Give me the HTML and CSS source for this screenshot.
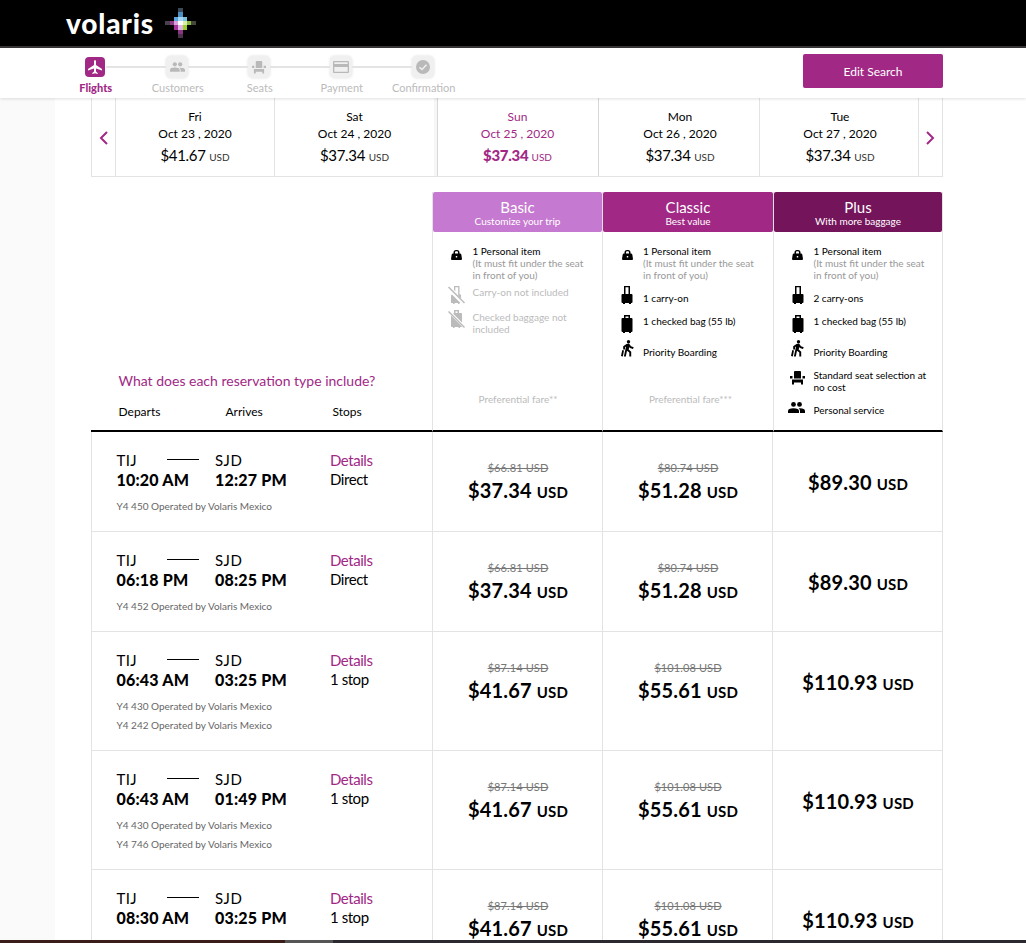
FILE: index.html
```html
<!DOCTYPE html>
<html lang="en">
<head>
<meta charset="utf-8">
<title>Volaris - Flights</title>
<link rel="stylesheet" href="styles.css">
</head>
<body>
<svg class="defs" width="0" height="0">
  <symbol id="bag" viewBox="0 0 11 10"><path fill-rule="evenodd" d="M2.500 3.500V2.500Q2.500 0 5 0H6Q8.500 0 8.500 2.500V3.500H9Q10 3.500 10.300 4.500L11 9Q11 10 10 10H1Q0 10 0 9L.7 4.500Q1 3.500 2 3.500ZM4 3.500H7V2.500Q7 1.300 6 1.300H5Q4 1.300 4 2.500ZM4.800 6V7.400H6.200V6Z"/></symbol>
  <symbol id="carry" viewBox="0 0 12 18"><path fill-rule="evenodd" d="M3 0H9V8H10.500Q11.500 8 11.500 9V16Q11.500 17 10.500 17H10V18H8V17H4V18H2V17H1.500Q.5 17 .5 16V9Q.5 8 1.500 8H3ZM4.500 1.200V8H7.500V1.200Z"/></symbol>
  <symbol id="case" viewBox="0 0 12 18"><path fill-rule="evenodd" d="M3 3V0H9V3H10.500Q11.500 3 11.500 4V16Q11.500 17 10.500 17H10V18H8V17H4V18H2V17H1.500Q.5 17 .5 16V4Q.5 3 1.500 3ZM4.500 1.500V3H7.500V1.500Z"/></symbol>
  <symbol id="walk" viewBox="0 0 13 17"><circle cx="7.500" cy="1.700" r="1.700"/><path d="M5.500 4L8 3.500L10 6.300L12.700 7.300L12 8.900L9 7.900L8.300 7L7.700 9.500L10.200 11.700V16.500H8.300V12.500L6 10.700L4.800 16.500H2.900L5 6.500L4 7.200V9.500H2.200V6.200Z"/><path d="M1.300 10L3 10.500L1.800 16.500L0 16Z"/></symbol>
  <symbol id="seat" viewBox="0 0 15 14"><path d="M4 1Q4 0 5 0H10Q11 0 11 1V7.500H4ZM0 5H2.500V7.500H0ZM12.500 5H15V7.500H12.500ZM2 8.500H13V13.500H11V11.500H4V13.500H2Z"/></symbol>
  <symbol id="people" viewBox="0 0 17 11"><circle cx="5.500" cy="2.400" r="2.400"/><circle cx="11.500" cy="2.400" r="2.400"/><path d="M0 11V9Q0 6.200 5.500 6.200Q11 6.200 11 9V11ZM12 11V9Q12 7.300 10.700 6.300Q17 6 17 9V11Z"/></symbol>
  <symbol id="nocarry" viewBox="0 0 17 18"><path d="M6 4V0H11.500V8.500H13V12.500L10.200 9.700V1.300H7.300V5.300ZM3 9.500L4 8.500L12.500 17H11.500V18H10V17H6.500V18H5V17H3Z"/><path d="M0 1.500L1 .5L17 16.500L16 17.500Z"/></symbol>
  <symbol id="nocase" viewBox="0 0 17 18"><path d="M6 3V0H11V3H13Q14 3 14 4V12.500L5 3.500ZM3 5.500L14 16.500L13 17H12V18H10.500V17H6.500V18H5V17H4Q3 17 3 16Z"/><path d="M0 2L1 1L17 17L16 18Z"/><path d="M7.500 1.300H9.500V3H7.500Z" class="hole"/></symbol>
</svg>
<header class="brand">
  <span class="logo">volaris</span>
  <svg class="star" width="31" height="30" viewBox="0 0 31 30">
    <path fill="#3c4a58" d="M13 0h5v4h-5z"/><path fill="#4d8fc0" d="M13 4h5v5h-5z"/><path fill="#5aa4dc" d="M9 9h4v4H9z"/><path fill="#a4d4f2" d="M13 9h5v4h-5z"/><path fill="#7cc0e0" d="M18 9h4v4h-4z"/>
    <path fill="#4a3f4c" d="M0 13h5v4H0z"/><path fill="#8d3a88" d="M5 13h4v4H5z"/><path fill="#d9a0dc" d="M9 13h4v4H9z"/><path fill="#fff" d="M13 13h5v4h-5z"/><path fill="#d7efa8" d="M18 13h4v4h-4z"/><path fill="#8cb848" d="M22 13h4v4h-4z"/><path fill="#44483a" d="M26 13h5v4h-5z"/>
    <path fill="#a8329c" d="M9 17h4v5H9z"/><path fill="#e0b4e4" d="M13 17h5v5h-5z"/><path fill="#9ad028" d="M18 17h4v5h-4z"/><path fill="#8a3484" d="M13 22h5v4h-5z"/><path fill="#4a3248" d="M13 26h5v4h-5z"/>
  </svg>
</header>
<nav class="steps">
  <ol class="track">
    <li class="step on"><span class="ico"><svg width="14" height="14" viewBox="0 0 14 14"><path d="M7 0Q8 0 8 1.500V5L14 9V10.500L8 8.500V11.500L9.700 13V14L7 13.200L4.300 14V13L6 11.500V8.500L0 10.500V9L6 5V1.500Q6 0 7 0Z"/></svg></span><span class="name">Flights</span></li>
    <li class="step"><span class="ico"><svg width="15" height="10"><use href="#people"/></svg></span><span class="name">Customers</span></li>
    <li class="step"><span class="ico"><svg width="14" height="13"><use href="#seat"/></svg></span><span class="name">Seats</span></li>
    <li class="step"><span class="ico"><svg width="16" height="12" viewBox="0 0 16 12"><path fill-rule="evenodd" d="M1 0H15Q16 0 16 1V11Q16 12 15 12H1Q0 12 0 11V1Q0 0 1 0ZM1.300 1.300V3H14.700V1.300ZM1.300 6V10.700H14.700V6Z"/></svg></span><span class="name">Payment</span></li>
    <li class="step"><span class="ico"><svg width="14" height="14" viewBox="0 0 14 14"><circle cx="7" cy="7" r="7"/><path d="M3.500 7.200L6 9.500L10.500 4.800" class="tick"/></svg></span><span class="name">Confirmation</span></li>
  </ol>
  <button class="edit">Edit Search</button>
</nav>
<main class="page">
  <div class="gutter"></div>
  <div class="content">
    <section class="dates">
      <div class="arrow"><svg width="9" height="14" viewBox="0 0 9 14"><path d="M8 1L2 7L8 13"/></svg></div>
      <div class="day"><span>Fri</span><span>Oct 23 , 2020</span><b>$41.67 <small>USD</small></b></div>
      <div class="day before"><span>Sat</span><span>Oct 24 , 2020</span><b>$37.34 <small>USD</small></b></div>
      <div class="day chosen"><span>Sun</span><span>Oct 25 , 2020</span><b>$37.34 <small>USD</small></b></div>
      <div class="day late"><span>Mon</span><span>Oct 26 , 2020</span><b>$37.34 <small>USD</small></b></div>
      <div class="day late"><span>Tue</span><span>Oct 27 , 2020</span><b>$37.34 <small>USD</small></b></div>
      <div class="arrow"><svg width="9" height="14" viewBox="0 0 9 14"><path d="M1 1L7 7L1 13"/></svg></div>
    </section>
    <section class="fares">
      <div class="intro">
        <a class="question">What does each reservation type include?</a>
        <div class="heads"><span>Departs</span><span>Arrives</span><span>Stops</span></div>
      </div>
      <div class="fare basic">
        <div class="title"><strong>Basic</strong><span>Customize your trip</span></div>
        <ul>
          <li class="personal"><i><svg width="11" height="10"><use href="#bag"/></svg></i><p>1 Personal item<em>(It must fit under the seat<br>in front of you)</em></p></li>
          <li class="none n1"><i><svg width="17" height="18"><use href="#nocarry"/></svg></i><p>Carry-on not included</p></li>
          <li class="none n2"><i><svg width="17" height="18"><use href="#nocase"/></svg></i><p>Checked baggage not<br>included</p></li>
        </ul>
        <span class="pref">Preferential fare**</span>
      </div>
      <div class="fare classic">
        <div class="title"><strong>Classic</strong><span>Best value</span></div>
        <ul>
          <li class="personal"><i><svg width="11" height="10"><use href="#bag"/></svg></i><p>1 Personal item<em>(It must fit under the seat<br>in front of you)</em></p></li>
          <li class="r1"><i><svg width="12" height="18"><use href="#carry"/></svg></i><p>1 carry-on</p></li>
          <li class="r2"><i><svg width="12" height="18"><use href="#case"/></svg></i><p>1 checked bag (55 lb)</p></li>
          <li class="r3"><i><svg width="13" height="17"><use href="#walk"/></svg></i><p>Priority Boarding</p></li>
        </ul>
        <span class="pref">Preferential fare***</span>
      </div>
      <div class="fare plus">
        <div class="title"><strong>Plus</strong><span>With more baggage</span></div>
        <ul>
          <li class="personal"><i><svg width="11" height="10"><use href="#bag"/></svg></i><p>1 Personal item<em>(It must fit under the seat<br>in front of you)</em></p></li>
          <li class="r1"><i><svg width="12" height="18"><use href="#carry"/></svg></i><p>2 carry-ons</p></li>
          <li class="r2"><i><svg width="12" height="18"><use href="#case"/></svg></i><p>1 checked bag (55 lb)</p></li>
          <li class="r3"><i><svg width="13" height="17"><use href="#walk"/></svg></i><p>Priority Boarding</p></li>
          <li class="r4"><i><svg width="15" height="14"><use href="#seat"/></svg></i><p>Standard seat selection at<br>no cost</p></li>
          <li class="r5"><i><svg width="17" height="11"><use href="#people"/></svg></i><p>Personal service</p></li>
        </ul>
      </div>
    </section>
    <section class="flights">
      <article class="flight">
        <div class="route"><div class="from"><span>TIJ</span><b>10:20 AM</b></div><hr><div class="to"><span>SJD</span><b>12:27 PM</b></div><div class="stops"><a>Details</a><span>Direct</span></div><p class="op">Y4 450 Operated by Volaris Mexico</p></div>
        <div class="cell"><s>$66.81 USD</s><b>$37.34 <small>USD</small></b></div><div class="cell"><s>$80.74 USD</s><b>$51.28 <small>USD</small></b></div><div class="cell solo"><b>$89.30 <small>USD</small></b></div>
      </article>
      <article class="flight">
        <div class="route"><div class="from"><span>TIJ</span><b>06:18 PM</b></div><hr><div class="to"><span>SJD</span><b>08:25 PM</b></div><div class="stops"><a>Details</a><span>Direct</span></div><p class="op">Y4 452 Operated by Volaris Mexico</p></div>
        <div class="cell"><s>$66.81 USD</s><b>$37.34 <small>USD</small></b></div><div class="cell"><s>$80.74 USD</s><b>$51.28 <small>USD</small></b></div><div class="cell solo"><b>$89.30 <small>USD</small></b></div>
      </article>
      <article class="flight two">
        <div class="route"><div class="from"><span>TIJ</span><b>06:43 AM</b></div><hr><div class="to"><span>SJD</span><b>03:25 PM</b></div><div class="stops"><a>Details</a><span>1 stop</span></div><p class="op">Y4 430 Operated by Volaris Mexico<br>Y4 242 Operated by Volaris Mexico</p></div>
        <div class="cell"><s>$87.14 USD</s><b>$41.67 <small>USD</small></b></div><div class="cell"><s>$101.08 USD</s><b>$55.61 <small>USD</small></b></div><div class="cell solo"><b>$110.93 <small>USD</small></b></div>
      </article>
      <article class="flight two">
        <div class="route"><div class="from"><span>TIJ</span><b>06:43 AM</b></div><hr><div class="to"><span>SJD</span><b>01:49 PM</b></div><div class="stops"><a>Details</a><span>1 stop</span></div><p class="op">Y4 430 Operated by Volaris Mexico<br>Y4 746 Operated by Volaris Mexico</p></div>
        <div class="cell"><s>$87.14 USD</s><b>$41.67 <small>USD</small></b></div><div class="cell"><s>$101.08 USD</s><b>$55.61 <small>USD</small></b></div><div class="cell solo"><b>$110.93 <small>USD</small></b></div>
      </article>
      <article class="flight two">
        <div class="route"><div class="from"><span>TIJ</span><b>08:30 AM</b></div><hr><div class="to"><span>SJD</span><b>03:25 PM</b></div><div class="stops"><a>Details</a><span>1 stop</span></div></div>
        <div class="cell"><s>$87.14 USD</s><b>$41.67 <small>USD</small></b></div><div class="cell"><s>$101.08 USD</s><b>$55.61 <small>USD</small></b></div><div class="cell solo"><b>$110.93 <small>USD</small></b></div>
      </article>
    </section>
  </div>
</main>
<footer class="strip"></footer>
</body>
</html>
```
FILE: styles.css
```css
* { box-sizing: border-box; }
body { margin: 0; height: 943px; overflow: hidden; display: flex; flex-direction: column; background: #fff; color: #000; font-family: Lato, "Liberation Sans", sans-serif; font-size: 12px; }
ul, ol, p { margin: 0; padding: 0; list-style: none; }
.defs { display: block; height: 0; flex: none; }

.brand { flex: none; height: 48px; background: #000; border-bottom: 2px solid #393637; display: flex; align-items: flex-start; padding-left: 66px; }
.logo { width: 99px; color: #fff; font: 900 28px/47px Lato, sans-serif; letter-spacing: .8px; }
.star { margin-top: 8px; }

.steps { flex: none; height: 50px; display: flex; justify-content: space-between; padding: 0 83px 0 54px; background: #fff; box-shadow: 0 1px 3px rgba(0,0,0,.13); position: relative; z-index: 1; }
.track { display: flex; }
.step { width: 82px; display: flex; flex-direction: column; align-items: center; color: #bbb; position: relative; padding-top: 8px; }
.step + .step::before { content: ""; position: absolute; left: -30px; top: 18px; width: 60px; height: 2px; background: #e4e4e4; }
.ico { width: 22px; height: 22px; border-radius: 5px; background: #f0f0f0; box-shadow: 0 0 3px #ddd; display: flex; align-items: center; justify-content: center; }
.ico svg { fill: #b9b9b9; }
.tick { fill: none; stroke: #f0f0f0; stroke-width: 1.5; }
.name { padding-left: 1.5px; font-size: 11px; line-height: 20px; white-space: nowrap; }
.on { color: #a12885; }
.on .ico { width: 20px; height: 20px; margin: 1px 0; background: #a12885; border-radius: 4px; box-shadow: none; }
.on .ico svg { fill: #fff; }
.on .name { font-weight: 900; }
.edit { margin-top: 6px; width: 140px; height: 34px; border: 0; border-radius: 2px; background: #a12885; color: #fff; font: 12px Lato, sans-serif; }

.page { flex: 1; min-height: 0; overflow: hidden; display: flex; }
.gutter { width: 55px; flex: none; margin-right: 36px; background: #fafafa; }
.content { width: 852px; flex: none; }

.dates { height: 79px; display: grid; grid-template-columns: 24px 159px 162px 162px 161px 159px 24px; border-bottom: 1px solid #e3e3e3; border-left: 1px solid #e3e3e3; }
.arrow { display: flex; align-items: center; justify-content: center; padding-top: 2px; border-right: 1px solid #e3e3e3; }
.arrow svg { fill: none; stroke: #a12885; stroke-width: 2; }
.arrow:first-child { padding-right: 1px; }
.day { display: flex; flex-direction: column; align-items: center; padding-top: 10px; border-right: 1px solid #e3e3e3; line-height: 17px; }
.late { padding-left: 2px; }
.day b { font-size: 15px; line-height: 26px; font-weight: 400; letter-spacing: -.3px; }
.day small { font-size: 10px; letter-spacing: 0; color: #333; }
.before { border-right: 3px solid #f6f6f6; }
.chosen { color: #a12885; border-left: 1px solid #d8d8d8; border-right-color: #d8d8d8; padding-right: 1px; }
.chosen b { font-weight: 900; }
.chosen small { color: #a12885; font-weight: 400; }

.fares { height: 255px; padding-top: 15px; display: grid; grid-template-columns: 341px 170px 171px 170px; }
.intro { border-bottom: 2px solid #000; padding: 180px 0 0 27.5px; }
.question { display: block; color: #a12885; font-size: 14px; line-height: 18px; }
.heads { margin-top: 13px; display: grid; grid-template-columns: 107px 107px 80px; line-height: 18px; }
.fare { border-left: 1px solid #e3e3e3; border-bottom: 2px solid #000; display: flex; flex-direction: column; }
.plus { border-right: 1px solid #e3e3e3; }
.title { height: 40px; border-radius: 2px; color: #fff; display: flex; flex-direction: column; align-items: center; padding-top: 6px; }
.basic .title { background: #c679d0; }
.classic .title { background: #a12885; }
.plus .title { background: #74155c; }
.title strong { font-weight: 400; font-size: 15px; line-height: 18px; }
.title span { font-size: 10px; line-height: 10px; }
.fare ul { padding: 13px 0 0 10px; font-size: 10px; line-height: 12px; }
.fare li { display: flex; }
.fare i { width: 27px; flex: none; display: flex; justify-content: center; margin-right: 2.5px; }
.classic ul { padding-left: 10.5px; }
.fare em { display: block; font-style: normal; color: #999; }
.fare p { white-space: nowrap; }
.personal i { padding-top: 5px; }
.none { color: #bbb; fill: #bbb; }
.hole { fill: #fff; }
.n1 { margin-top: 5px; height: 20px; }
.n2 { margin-top: 5px; }
.n2 i { margin-top: -1px; }
.r1 { margin-top: 5px; height: 18px; }
.r1 p { padding-top: 6px; }
.r2 { margin-top: 10px; height: 18px; }
.r2 i { padding-top: 1px; }
.r2 p { padding-top: 1px; }
.r3 { margin-top: 8px; height: 18px; }
.r3 p { padding-top: 6px; }
.r4 { margin-top: 11px; height: 24px; }
.r4 i { padding-top: 2px; }
.r5 { margin-top: 9px; height: 15px; }
.r5 i { margin-left: -1px; margin-right: 3.5px; }
.r5 p { padding-top: 2px; }
.pref { margin: auto auto 24px; padding-left: 1px; color: #bbb; font-size: 10px; line-height: 14px; }
.classic .pref { padding-left: 5px; }

.flight { height: 100px; display: grid; grid-template-columns: 341px 170px 170px 171px; border-bottom: 1px solid #e3e3e3; }
.two { height: 119px; }
.route { border-left: 1px solid #e3e3e3; display: grid; grid-template: 39px 1fr / 50.5px 32px 16px 115px 100px; padding: 18px 0 0 24.5px; }
.route > div { display: flex; flex-direction: column; white-space: nowrap; }
.route span, .route a { font-size: 15px; line-height: 20px; }
.route b { font-size: 16px; line-height: 20px; font-weight: 900; letter-spacing: .2px; }
.from { grid-column: 1; }
.to { grid-column: 4; }
.to span { letter-spacing: .5px; }
.from span { letter-spacing: .4px; }
.stops { grid-column: 5; letter-spacing: -.45px; }
.route .stops span { line-height: 19px; }
.stops a { color: #a12885; }
.route hr { margin: 9px 0 0; border: 0; height: 1px; background: #000; width: 32px; }
.op { grid-column: 1 / -1; font-size: 10px; line-height: 19px; color: #666; padding-top: 8px; }
.cell { border-left: 1px solid #e3e3e3; display: flex; flex-direction: column; align-items: center; padding: 29px 0 0 1px; }
.cell s { font-size: 11px; line-height: 14px; color: #777; letter-spacing: .1px; }
.cell b { font-size: 20px; line-height: 30px; white-space: nowrap; letter-spacing: .15px; }
.cell small { font-size: 15px; }
.solo { border-right: 1px solid #e3e3e3; padding-top: 35px; }
.strip { flex: none; height: 3px; background: linear-gradient(90deg, #3a1d18 0 285px, #555 285px 333px, #2c2a30 333px); }
```
